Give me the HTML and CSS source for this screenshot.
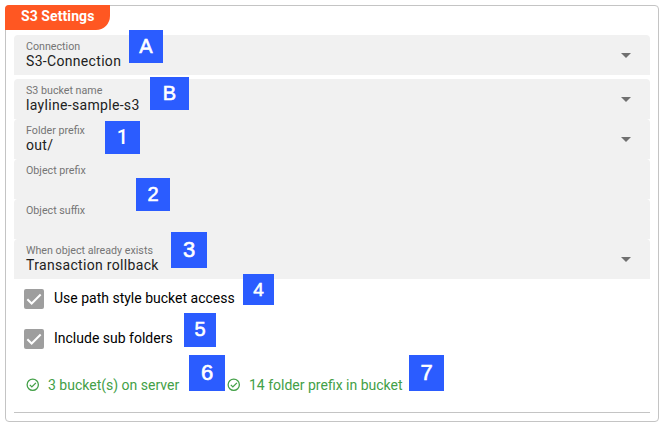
FILE: index.html
```html
<!DOCTYPE html>
<html lang="en">
<head>
<meta charset="utf-8">
<title>S3 Settings</title>
<link rel="stylesheet" href="styles.css">
</head>
<body>
<section class="card">
  <h1 class="title">S3 Settings</h1>
  <div class="fields">
    <div class="field spaced"><div><div class="label">Connection</div><div class="value">S3-Connection</div></div><i class="arrow"></i></div>
    <div class="field"><div><div class="label">S3 bucket name</div><div class="value">layline-sample-s3</div></div><i class="arrow"></i></div>
    <div class="field"><div><div class="label">Folder prefix</div><div class="value">out/</div></div><i class="arrow"></i></div>
    <div class="field"><div><div class="label">Object prefix</div></div></div>
    <div class="field"><div><div class="label">Object suffix</div></div></div>
    <div class="field"><div><div class="label">When object already exists</div><div class="value">Transaction rollback</div></div><i class="arrow"></i></div>
  </div>
  <div class="check"><span class="box"><svg viewBox="0 0 24 24"><path d="M2 12.3 8.5 18.8 22 5.3"/></svg></span><span class="caption">Use path style bucket access</span></div>
  <div class="check"><span class="box"><svg viewBox="0 0 24 24"><path d="M2 12.3 8.5 18.8 22 5.3"/></svg></span><span class="caption">Include sub folders</span></div>
  <div class="status">
    <div class="item first"><svg viewBox="0 0 24 24"><circle cx="12" cy="12" r="10"/><path d="m6.8 12.2 3.6 3.6 7.2-7.2"/></svg><span>3 bucket(s) on server</span></div>
    <div class="item"><svg viewBox="0 0 24 24"><circle cx="12" cy="12" r="10"/><path d="m6.8 12.2 3.6 3.6 7.2-7.2"/></svg><span>14 folder prefix in bucket</span></div>
  </div>
  <hr class="rule">
</section>
<span class="mark mark-a">A</span>
<span class="mark mark-b">B</span>
<span class="mark mark-1">1</span>
<span class="mark mark-2">2</span>
<span class="mark mark-3">3</span>
<span class="mark mark-4">4</span>
<span class="mark mark-5">5</span>
<span class="mark mark-6">6</span>
<span class="mark mark-7">7</span>
</body>
</html>
```
FILE: styles.css
```css
* { box-sizing: border-box; }
body { margin: 0; padding: 5px 2px 3px 5px; height: 425px; overflow: hidden; background: #fff; font-family: Roboto, sans-serif; color: #212121; }
.card { height: 417px; border: 1px solid #c4c4c4; border-radius: 4px; padding: 0 8px; }
.title { margin: -1px 0 0 -9px; width: 105px; height: 25px; padding-left: 16px; border-radius: 4px 0 14px 0; background: #ff5722; color: #fff; font-size: 14px; line-height: 22px; font-weight: 700; letter-spacing: .08px; }
.fields { margin-top: 5px; }
.field { display: flex; justify-content: space-between; height: 40px; padding: 5px 19px 0 12px; background: #f1f1f1; border-radius: 4px 4px 0 0; }
.spaced { margin-bottom: 4px; }
.label { font-size: 10.7px; line-height: 14px; color: #757575; }
.value { margin-top: -1px; font-size: 14px; line-height: 16px; letter-spacing: .32px; }
.arrow { width: 10px; height: 5px; margin-top: 13px; border: 5px solid transparent; border-top-color: #707070; border-bottom: 0; }
.check { display: flex; align-items: center; gap: 10px; height: 40px; padding-left: 10px; font-size: 14px; color: #000; }
.caption { padding-bottom: 2px; }
.box { width: 20px; height: 20px; border-radius: 2px; background: #9e9e9e; display: flex; align-items: center; justify-content: center; }
.box svg { width: 16px; height: 16px; fill: none; stroke: #fff; stroke-width: 3; }
.status { display: flex; height: 52px; align-items: center; padding-left: 12px; color: #43a047; font-size: 14px; }
.item { display: flex; align-items: center; gap: 8.5px; }
.first { width: 201px; }
.item svg { width: 13.5px; height: 13.5px; fill: none; stroke: currentColor; stroke-width: 2.3; }
.rule { margin: 1px 0 0; border: 0; height: 1px; background: #c4c4c4; }
.mark { position: absolute; display: flex; align-items: center; justify-content: center; background: #2b5cff; color: #fff; font: 500 20px "Liberation Sans", sans-serif; -webkit-text-stroke: .6px #fff; }
.mark-a { left: 129px; top: 30px; width: 34px; height: 33px; }
.mark-b { left: 150px; top: 77px; width: 39px; height: 33px; }
.mark-1 { left: 105px; top: 121px; width: 35px; height: 33px; font-family: Roboto, sans-serif; -webkit-text-stroke-width: 0; padding-bottom: 2px; }
.mark-2 { left: 136px; top: 178px; width: 34px; height: 33px; }
.mark-3 { left: 171px; top: 232px; width: 36px; height: 36px; font-size: 22px; padding-bottom: 1px; }
.mark-4 { left: 243px; top: 274px; width: 31px; height: 31px; font-size: 19px; }
.mark-5 { left: 184px; top: 313px; width: 32px; height: 34px; padding-bottom: 1px; }
.mark-6 { left: 189px; top: 355px; width: 36px; height: 36px; font-size: 22px; }
.mark-7 { left: 409px; top: 355px; width: 35px; height: 36px; font-size: 22px; }
```
